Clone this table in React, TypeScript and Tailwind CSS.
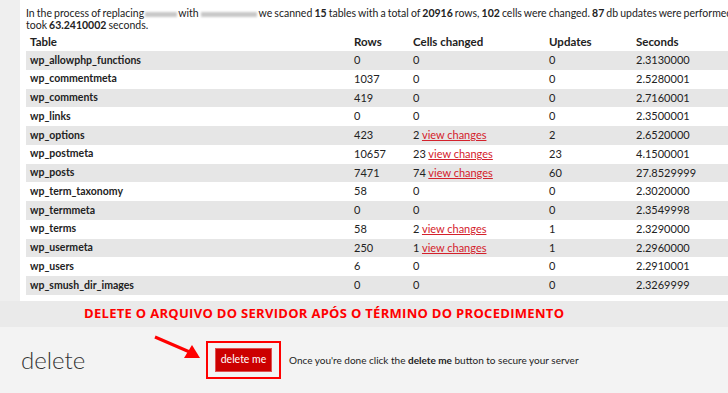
import React from "react";

const rows: [string, string, string, boolean, string, string][] = [
  ["wp_allowphp_functions", "0", "0", false, "0", "2.3130000"],
  ["wp_commentmeta", "1037", "0", false, "0", "2.5280001"],
  ["wp_comments", "419", "0", false, "0", "2.7160001"],
  ["wp_links", "0", "0", false, "0", "2.3500001"],
  ["wp_options", "423", "2", true, "2", "2.6520000"],
  ["wp_postmeta", "10657", "23", true, "23", "4.1500001"],
  ["wp_posts", "7471", "74", true, "60", "27.8529999"],
  ["wp_term_taxonomy", "58", "0", false, "0", "2.3020000"],
  ["wp_termmeta", "0", "0", false, "0", "2.3549998"],
  ["wp_terms", "58", "2", true, "1", "2.3290000"],
  ["wp_usermeta", "250", "1", true, "1", "2.2960000"],
  ["wp_users", "6", "0", false, "0", "2.2910001"],
  ["wp_smush_dir_images", "0", "0", false, "0", "2.3269999"],
];

const cols = "grid grid-cols-[324px_59px_136px_87px_1fr]";

export default function App() {
  return (
    <div className="w-[728px] h-[393px] overflow-hidden bg-[#f3f3f3] text-[#222] font-['Lato','Open_Sans',sans-serif] text-[11px]">
      <div className="flex h-[301px] bg-[#efefef]">
        <div className="w-[20px] shrink-0" />
        <div className="flex-1 bg-white pl-[6px] pt-[8px] overflow-hidden">
          <div className="w-[780px] leading-[11.5px] whitespace-nowrap text-[10.5px] [word-spacing:-0.6px]">
            <p>
              In the process of replacing
              <span className="inline-block align-middle w-[32px] h-[5px] bg-[#c8c8c8] blur-[1px] mx-[1px]" />
              with
              <span className="inline-block align-middle w-[56px] h-[5px] bg-[#c8c8c8] blur-[1px] mx-[2px]" />
              we scanned <b>15</b> tables with a total of <b>20916</b> rows, <b>102</b> cells were changed. <b>87</b> db updates were performed. It also
              <br />
              took <b>63.2410002</b> seconds.
            </p>
          </div>
          <div className="mt-[2px] w-[760px]">
            <div className={`${cols} h-[18px] items-center font-bold text-[11.5px]`}>
              <div className="pl-[4px]">Table</div>
              <div className="pl-[4px]">Rows</div>
              <div className="pl-[4px]">Cells changed</div>
              <div className="pl-[4px]">Updates</div>
              <div className="pl-[4px]">Seconds</div>
            </div>
            {rows.map((r, i) => (
              <div
                key={r[0]}
                className={`${cols} h-[18.75px] items-center ${i % 2 === 0 ? "bg-[#e6e6e6]" : "bg-white"}`}
              >
                <div className="pl-[4px] font-bold text-[10.5px]">{r[0]}</div>
                <div className="pl-[4px]">{r[1]}</div>
                <div className="pl-[4px]">
                  {r[2]}
                  {r[3] && (
                    <>
                      {" "}
                      <a className="text-[#d4212b] underline">view changes</a>
                    </>
                  )}
                </div>
                <div className="pl-[4px]">{r[4]}</div>
                <div className="pl-[4px]">{r[5]}</div>
              </div>
            ))}
          </div>
        </div>
      </div>
      <div className="h-[26px] bg-[#eaeaea] flex items-center pl-[84px]">
        <span className="font-['Open_Sans',sans-serif] font-bold text-[13px] text-[#ff0000] tracking-[0.3px]">
          DELETE O ARQUIVO DO SERVIDOR APÓS O TÉRMINO DO PROCEDIMENTO
        </span>
      </div>
      <div className="flex items-center h-[66px] pl-[21px]">
        <span className="font-['Lato',sans-serif] font-light text-[24px] text-[#333] w-[185px]">delete</span>
        <div className="relative">
          <svg className="absolute left-[-54px] top-[-8px]" width="52" height="30" viewBox="0 0 52 30">
            <line x1="3" y1="4" x2="40" y2="20" stroke="#ff0000" strokeWidth="3" />
            <polygon points="48,25 32,25 40,12" fill="#ff0000" />
          </svg>
          <div className="border-2 border-[#ff0000] p-[6px] w-[75px] h-[38px] flex items-center justify-center">
            <button className="bg-[#cc0000] text-white text-[10.5px] w-[57px] h-[24px] border border-[#e05050]">delete me</button>
          </div>
        </div>
        <span className="ml-[8px] text-[10px] text-[#222]">
          Once you're done click the <b>delete me</b> button to secure your server
        </span>
      </div>
    </div>
  );
}
